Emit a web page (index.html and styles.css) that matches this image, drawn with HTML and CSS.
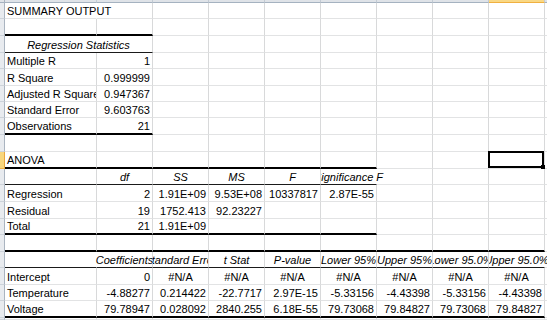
FILE: index.html
```html
<!DOCTYPE html>
<html>
<head>
<meta charset="utf-8">
<link rel="stylesheet" href="styles.css">
</head>
<body>
<div class="sheet">
  <div class="row hdr h3">
    <div class="rh corner"></div><div class="c"></div><div class="c"></div><div class="c"></div><div class="c"></div><div class="c"></div><div class="c"></div><div class="c"></div><div class="c"></div><div class="c on"></div><div class="c j"></div>
  </div>
  <div class="row h16">
    <div class="rh"></div><div class="c ov nr">SUMMARY OUTPUT</div><div class="c"></div><div class="c"></div><div class="c"></div><div class="c"></div><div class="c"></div><div class="c"></div><div class="c"></div><div class="c"></div><div class="c j"></div>
  </div>
  <div class="row h17">
    <div class="rh"></div><div class="c tb"></div><div class="c tb"></div><div class="c"></div><div class="c"></div><div class="c"></div><div class="c"></div><div class="c"></div><div class="c"></div><div class="c"></div><div class="c j"></div>
  </div>
  <div class="row h17">
    <div class="rh"></div><div class="c s2 m i hb">Regression Statistics</div><div class="c"></div><div class="c"></div><div class="c"></div><div class="c"></div><div class="c"></div><div class="c"></div><div class="c"></div><div class="c j"></div>
  </div>
  <div class="row h16">
    <div class="rh"></div><div class="c">Multiple R</div><div class="c n">1</div><div class="c"></div><div class="c"></div><div class="c"></div><div class="c"></div><div class="c"></div><div class="c"></div><div class="c"></div><div class="c j"></div>
  </div>
  <div class="row h17">
    <div class="rh"></div><div class="c">R Square</div><div class="c n">0.999999</div><div class="c"></div><div class="c"></div><div class="c"></div><div class="c"></div><div class="c"></div><div class="c"></div><div class="c"></div><div class="c j"></div>
  </div>
  <div class="row h16">
    <div class="rh"></div><div class="c">Adjusted R Square</div><div class="c n">0.947367</div><div class="c"></div><div class="c"></div><div class="c"></div><div class="c"></div><div class="c"></div><div class="c"></div><div class="c"></div><div class="c j"></div>
  </div>
  <div class="row h16">
    <div class="rh"></div><div class="c">Standard Error</div><div class="c n">9.603763</div><div class="c"></div><div class="c"></div><div class="c"></div><div class="c"></div><div class="c"></div><div class="c"></div><div class="c"></div><div class="c j"></div>
  </div>
  <div class="row h17">
    <div class="rh"></div><div class="c tb">Observations</div><div class="c n tb">21</div><div class="c"></div><div class="c"></div><div class="c"></div><div class="c"></div><div class="c"></div><div class="c"></div><div class="c"></div><div class="c j"></div>
  </div>
  <div class="row h17">
    <div class="rh"></div><div class="c"></div><div class="c"></div><div class="c"></div><div class="c"></div><div class="c"></div><div class="c"></div><div class="c"></div><div class="c"></div><div class="c"></div><div class="c j"></div>
  </div>
  <div class="row h17">
    <div class="rh on"></div><div class="c tb">ANOVA</div><div class="c tb"></div><div class="c tb"></div><div class="c tb"></div><div class="c tb"></div><div class="c tb"></div><div class="c"></div><div class="c"></div><div class="c sel"><span class="selbox"></span><span class="handle"></span></div><div class="c j"></div>
  </div>
  <div class="row h16">
    <div class="rh"></div><div class="c hb"></div><div class="c hb m i">df</div><div class="c hb m i">SS</div><div class="c hb m i">MS</div><div class="c hb m i">F</div><div class="c hb m i or nr">Significance F</div><div class="c"></div><div class="c"></div><div class="c"></div><div class="c j"></div>
  </div>
  <div class="row h17">
    <div class="rh"></div><div class="c">Regression</div><div class="c n">2</div><div class="c n">1.91E+09</div><div class="c n">9.53E+08</div><div class="c n">10337817</div><div class="c n">2.87E-55</div><div class="c"></div><div class="c"></div><div class="c"></div><div class="c j"></div>
  </div>
  <div class="row h17">
    <div class="rh"></div><div class="c">Residual</div><div class="c n">19</div><div class="c n">1752.413</div><div class="c n">92.23227</div><div class="c"></div><div class="c"></div><div class="c"></div><div class="c"></div><div class="c"></div><div class="c j"></div>
  </div>
  <div class="row h16">
    <div class="rh"></div><div class="c tb">Total</div><div class="c n tb">21</div><div class="c n tb">1.91E+09</div><div class="c tb"></div><div class="c tb"></div><div class="c tb"></div><div class="c"></div><div class="c"></div><div class="c"></div><div class="c j"></div>
  </div>
  <div class="row h17">
    <div class="rh"></div><div class="c tb"></div><div class="c tb"></div><div class="c tb"></div><div class="c tb"></div><div class="c tb"></div><div class="c tb"></div><div class="c tb"></div><div class="c tb"></div><div class="c tb"></div><div class="c j"></div>
  </div>
  <div class="row h16">
    <div class="rh"></div><div class="c hb nr"></div><div class="c hb m i ol">Coefficients</div><div class="c hb m i">Standard Error</div><div class="c hb m i">t Stat</div><div class="c hb m i">P-value</div><div class="c hb m i">Lower 95%</div><div class="c hb m i">Upper 95%</div><div class="c hb m i">Lower 95.0%</div><div class="c hb m i or nr">Upper 95.0%</div><div class="c j"></div>
  </div>
  <div class="row h17">
    <div class="rh"></div><div class="c">Intercept</div><div class="c n">0</div><div class="c m">#N/A</div><div class="c m">#N/A</div><div class="c m">#N/A</div><div class="c m">#N/A</div><div class="c m">#N/A</div><div class="c m">#N/A</div><div class="c m">#N/A</div><div class="c j"></div>
  </div>
  <div class="row h16">
    <div class="rh"></div><div class="c">Temperature</div><div class="c n">-4.88277</div><div class="c n">0.214422</div><div class="c n">-22.7717</div><div class="c n">2.97E-15</div><div class="c n">-5.33156</div><div class="c n">-4.43398</div><div class="c n">-5.33156</div><div class="c n">-4.43398</div><div class="c j"></div>
  </div>
  <div class="row h17">
    <div class="rh"></div><div class="c tb">Voltage</div><div class="c n tb">79.78947</div><div class="c n tb">0.028092</div><div class="c n tb">2840.255</div><div class="c n tb">6.18E-55</div><div class="c n tb">79.73068</div><div class="c n tb">79.84827</div><div class="c n tb">79.73068</div><div class="c n tb">79.84827</div><div class="c j"></div>
  </div>
  <div class="row h2">
    <div class="rh"></div><div class="c"></div><div class="c"></div><div class="c"></div><div class="c"></div><div class="c"></div><div class="c"></div><div class="c"></div><div class="c"></div><div class="c"></div><div class="c j"></div>
  </div>
</div>
</body>
</html>
```

FILE: styles.css
```css
html, body {
  margin: 0;
  padding: 0;
  background: #ffffff;
}
body {
  width: 547px;
  height: 320px;
  overflow: hidden;
  font-family: "Liberation Sans", Arial, sans-serif;
  font-size: 11px;
  color: #000000;
}
.sheet {
  display: flex;
  flex-direction: column;
}
.row {
  display: grid;
  grid-template-columns: 5px 92px repeat(8, 56px) 2px;
}
.h16 { height: 16px; }
.h17 { height: 17px; }
.h3 { height: 3px; }
.h2 { height: 2px; }

.c {
  box-sizing: border-box;
  border-right: 1px solid #d8d9da;
  border-bottom: 1px solid #e2e3e4;
  display: flex;
  align-items: flex-end;
  overflow: hidden;
  white-space: nowrap;
  line-height: 13px;
  padding: 0 2px;
  min-width: 0;
}
.n { justify-content: flex-end; }
.m { justify-content: center; }
.i { font-style: italic; }
.s2 { grid-column: span 2; }
.tb { border-bottom: 2px solid #000000; }
.hb { border-bottom: 1px solid #1a1a1a; }
.ov { overflow: visible; }
.nr { border-right-color: transparent; }
.ol { overflow: visible; clip-path: inset(-2px 0 0 -30px); }
.or { overflow: visible; clip-path: inset(-2px -60px 0 0); }
.j { padding: 0; border-right: 0; }

.rh {
  box-sizing: border-box;
  background: #e8ebef;
  border-right: 1px solid #aab4c0;
  border-bottom: 1px solid #cdd3da;
}
.rh.on {
  background: #f8d67c;
  border-bottom-color: #efb24a;
  border-right-color: #e9a53c;
}

.hdr .c {
  padding: 0;
  background: #dfe3e8;
  border-right-color: #c3cbd4;
  border-bottom: 1px solid #a5b2c0;
}
.hdr .c.on {
  background: #f9d885;
  border-bottom-color: #f0b040;
}
.hdr .rh.corner {
  background: #dfe3e8;
  border-bottom-color: #a5b2c0;
}

.sel {
  position: relative;
  overflow: visible;
}
.selbox {
  position: absolute;
  top: -1px;
  left: -1px;
  right: 0;
  bottom: 0;
  border: 2px solid #000000;
}
.handle {
  position: absolute;
  right: -1px;
  bottom: -1px;
  width: 4px;
  height: 4px;
  background: #000000;
}
```
